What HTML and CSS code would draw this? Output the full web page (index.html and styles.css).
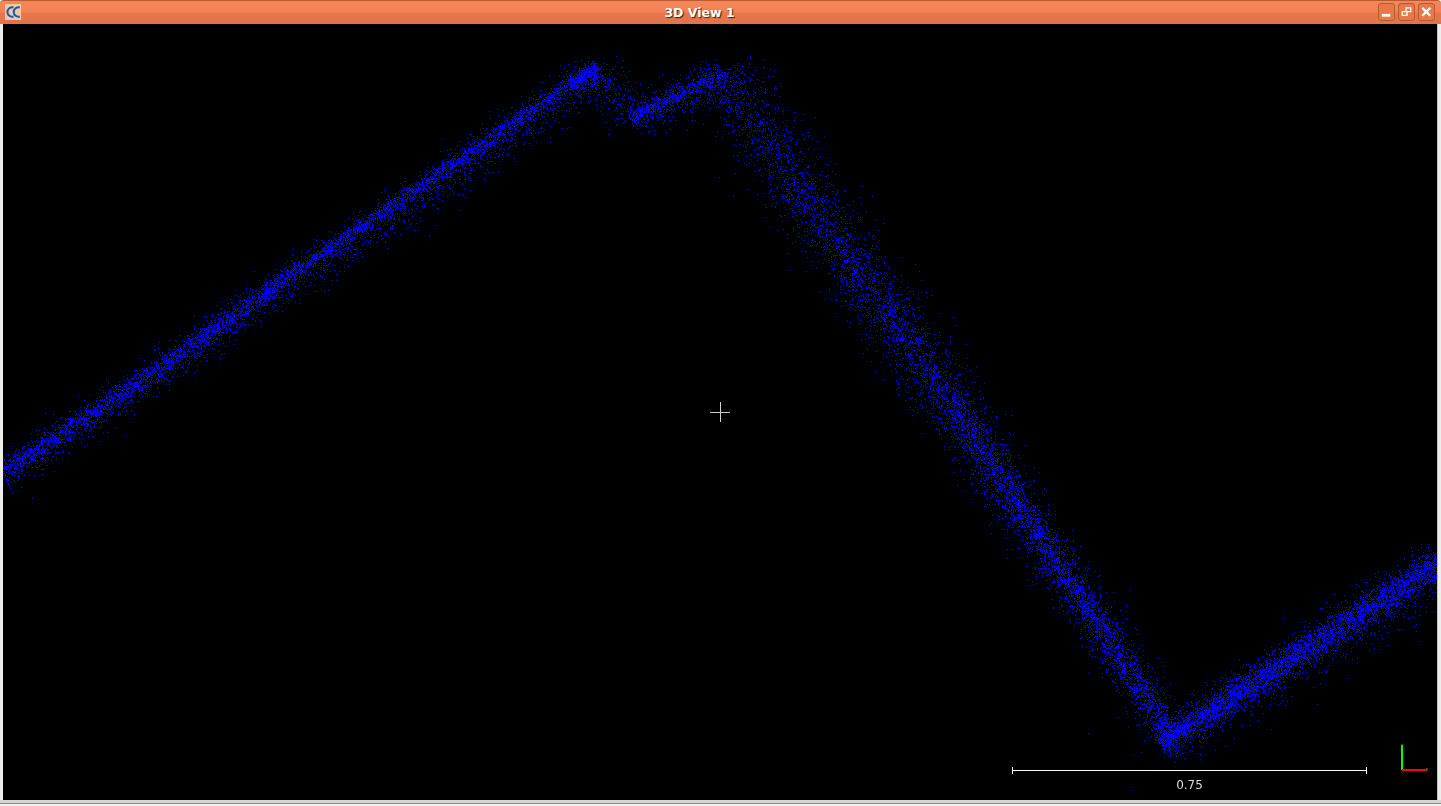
FILE: index.html
```html
<!DOCTYPE html>
<html>
    <head>
        <meta charset='utf-8'>
        <title>3D View 1</title>
        <link rel="stylesheet" href="styles.css">
    </head>
    <body>
        <div class="window">
            <div class="titlebar">
                <div class="appicon">
                    <svg width="16" height="16" viewBox="0 0 16 16">
                        <path d="M8.500 3.500A4.700 4.700 0 1 0 8.500 12.500M14.800 3.500A4.700 4.700 0 1 0 14.800 12.500" fill="none" stroke="#0f5f9e" stroke-width="2"/>
                    </svg>
                </div>
                <div class="title">3D View 1</div>
                <div class="buttons">
                    <div class="winbtn">
                        <svg width="16" height="16" viewBox="0 0 16 16"><rect x="3" y="10" width="9" height="3" fill="#fff"/></svg>
                    </div>
                    <div class="winbtn">
                        <svg width="16" height="16" viewBox="0 0 16 16">
                            <path d="M7.500 3.500h5v4h-5zM3.500 7.500h5v4h-5z" fill="none" stroke="#fff" stroke-width="1.400"/>
                        </svg>
                    </div>
                    <div class="winbtn">
                        <svg width="16" height="16" viewBox="0 0 16 16"><path d="M3.500 3.500l8.500 8.500M12 3.500l-8.500 8.500" stroke="#fff" stroke-width="2.600"/></svg>
                    </div>
                </div>
            </div>
            <div class="view">
                <canvas id="cloud" width="1434" height="776"></canvas>
                <div class="cross"></div>
                <div class="scale">
                    <div class="scalebar"></div>
                    <div class="scalelabel">0.75</div>
                </div>
                <svg class="axes" width="30" height="30" viewBox="0 0 30 30">
                    <path d="M2 1v25" stroke="#00ff00" stroke-width="2"/>
                    <path d="M2 26h25" stroke="#ff0000" stroke-width="2"/>
                    <path d="M1 1h2M27 24v2" stroke="#00c000" stroke-width="1"/>
                </svg>
            </div>
            <div class="bottomframe"></div>
        </div>
        <script src="cloud.js"></script>
    </body>
</html>
```

FILE: styles.css
```css
html, body {
    margin: 0;
    height: 100%;
    overflow: hidden;
    background: #eeeeec;
}
.window {
    display: flex;
    flex-direction: column;
    height: 806px;
}
.titlebar {
    display: flex;
    align-items: center;
    height: 24px;
    box-sizing: border-box;
    padding: 0 6px 1px 5px;
    border-top: 1px solid #b85a34;
    border-radius: 4px 4px 0 0;
    background: linear-gradient(#f68658 0, #f28256 11px, #e7784b 12px, #e2734a 23px);
}
.appicon {
    width: 16px;
    height: 16px;
    background: #f4c6ae;
}
.title {
    flex: 1;
    text-align: center;
    font: bold 12.500px "DejaVu Sans", sans-serif;
    color: #fff;
    text-shadow: 1px 1px 1px #3a2010;
}
.buttons {
    display: flex;
    gap: 3px;
}
.winbtn {
    display: flex;
    align-items: center;
    justify-content: center;
    width: 15px;
    height: 16px;
    border: 1px solid #b45a36;
    border-radius: 3px;
    background: #e8774a;
}
.view {
    position: relative;
    flex: 1;
    margin: 0 3px 0 3px;
    border-right: 1px solid #c4c2be;
    background: #000;
}
#cloud {
    display: block;
}
.cross {
    position: absolute;
    left: 707px;
    top: 378px;
    width: 20px;
    height: 20px;
    background:
        linear-gradient(#cccccc, #cccccc) center / 1px 20px no-repeat,
        linear-gradient(#cccccc, #cccccc) center / 20px 1px no-repeat;
}
.scale {
    position: absolute;
    left: 1009px;
    top: 743px;
    width: 355px;
}
.scalebar {
    height: 7px;
    border-left: 1px solid #fff;
    border-right: 1px solid #fff;
    background: linear-gradient(#fff, #fff) center / 100% 1px no-repeat;
}
.scalelabel {
    margin-top: 4px;
    text-align: center;
    font: 12px "DejaVu Sans", sans-serif;
    color: #dddddd;
}
.axes {
    position: absolute;
    left: 1397px;
    top: 720px;
}
.bottomframe {
    height: 6px;
    box-sizing: border-box;
    border-top: 3px solid #d6d4d0;
    border-bottom: 2px solid #f2f2f0;
    background: #8e8c88;
}
```

FILE: cloud.js
```js
// fake point cloud, seeded so it looks the same each run
var seed = 12345;
function rnd()
{
    seed = (seed * 1664525 + 1013904223) % 4294967296;
    return seed / 4294967296;
}
function gauss()
{
    return Math.sqrt(-2 * Math.log(rnd() + 1e-9)) * Math.cos(6.2831853 * rnd());
}

// x0, y0, x1, y1, core count, core sd, scatter count, scatter sd, scatter shift (+ is down/left side)
var segments = [
    [0, 473, 133, 386, 1000, 4.500, 650, 9, 3],
    [133, 386, 300, 268, 1300, 4.500, 800, 9, 4],
    [300, 268, 590, 70, 2100, 3.500, 1500, 10, 7],
    [570, 84, 598, 67, 250, 3, 200, 8, 3],
    [598, 67, 632, 118, 30, 5, 220, 11, 1],
    [630, 118, 722, 72, 550, 3.500, 550, 10, 3],
    [722, 72, 800, 185, 180, 8, 800, 18, 0],
    [800, 185, 850, 262, 220, 10, 600, 18, 0],
    [850, 262, 910, 342, 300, 10, 700, 17, 0],
    [910, 342, 950, 402, 220, 9, 500, 16, 1],
    [950, 402, 1010, 492, 480, 7, 800, 14, 1],
    [1010, 492, 1060, 567, 480, 6, 650, 12, 1],
    [1060, 567, 1105, 632, 480, 6, 500, 11, 1],
    [1105, 632, 1172, 735, 650, 7, 550, 12, 1],
    [1160, 744, 1303, 650, 2300, 6.500, 1000, 11, 2],
    [1303, 650, 1441, 560, 1800, 6.500, 1000, 12, 3],
    [1230, 710, 1441, 575, 0, 0, 90, 12, 16]
];

var ctx = document.getElementById('cloud').getContext('2d');
// canvas starts 3px right and 24px below the window corner
function dot(x, y)
{
    ctx.fillRect(Math.round(x) - 3, Math.round(y) - 24, 1, 1);
}

ctx.fillStyle = '#0000ff';
for (var i = 0; i < segments.length; i++)
{
    var s = segments[i];
    var dx = s[2] - s[0], dy = s[3] - s[1];
    var len = Math.sqrt(dx * dx + dy * dy);
    var nx = -dy / len, ny = dx / len;
    if (ny < 0)
    {
        nx = -nx;
        ny = -ny;
    }
    for (var j = 0; j < s[4] + s[6]; j++)
    {
        var t = rnd();
        var off = j < s[4] ? gauss() * s[5] : gauss() * s[7] + s[8];
        dot(s[0] + dx * t + nx * off + (rnd() - 0.5) * 3, s[1] + dy * t + ny * off);
    }
}

// the few stray points far from the band
var stray = [[1132, 790], [1088, 733], [1215, 750], [1200, 754], [1090, 640], [1250, 725], [860, 320], [770, 190]];
for (var k = 0; k < stray.length; k++)
    dot(stray[k][0], stray[k][1]);

ctx.fillStyle = '#e01010';
dot(1203, 738);
```
